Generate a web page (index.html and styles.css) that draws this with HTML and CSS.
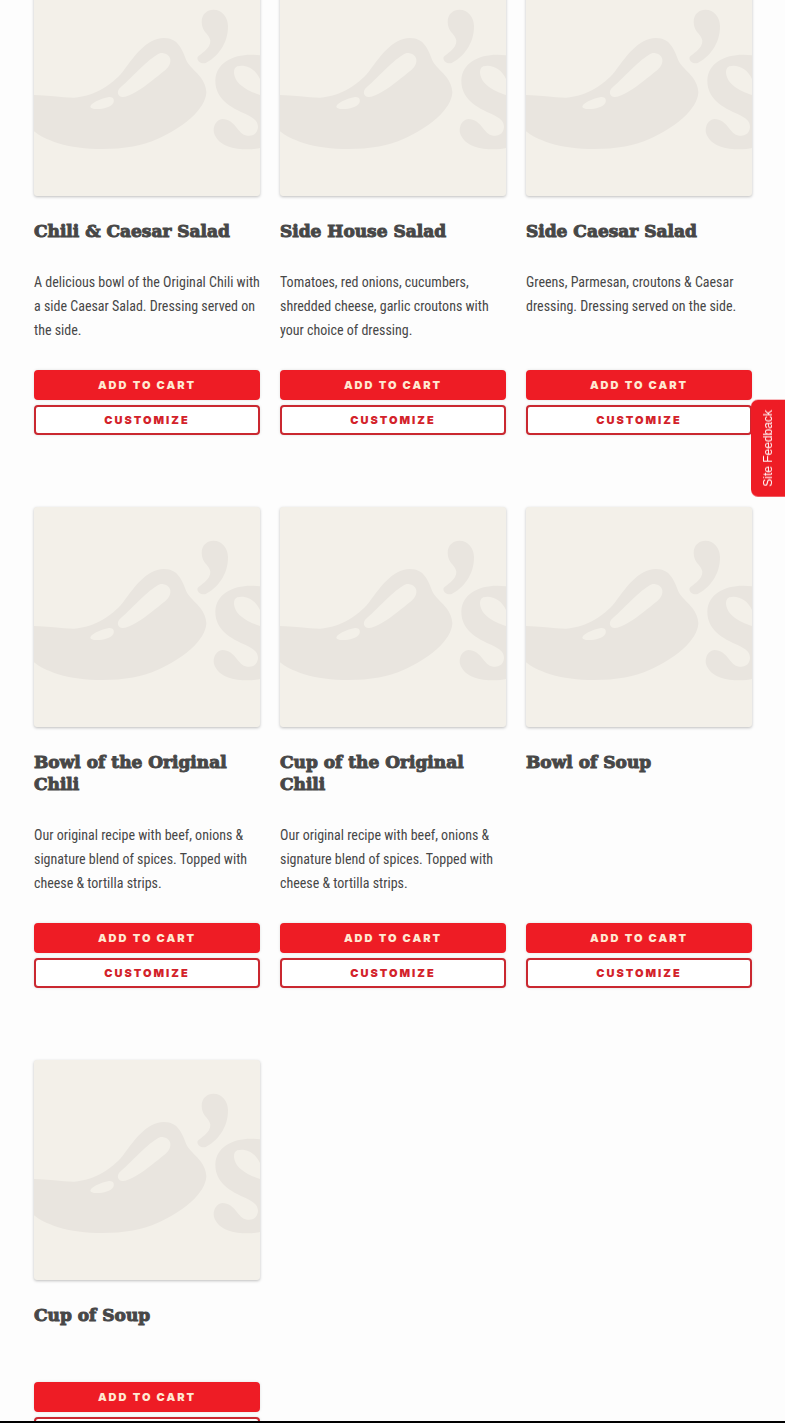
FILE: index.html
```html
<!DOCTYPE html>
<html lang="en">
<head>
  <meta charset="UTF-8">
  <meta name="viewport" content="width=device-width, initial-scale=1.0">
  <title>Soups, Chili &amp; Salads</title>
  <link rel="stylesheet" href="styles.css">
</head>
<body>

  <!-- Placeholder artwork shared by every menu item -->
  <svg class="sprite" aria-hidden="true">
    <symbol id="chili" viewBox="30 21 678 660" preserveAspectRatio="none">
      <path fill-rule="evenodd" d="M30 378 C70 378 110 386 150 386 C215 382 265 345 295 310 C325 270 365 207 420 207 C465 207 475 245 490 280 C505 305 545 325 547 370 C545 420 480 475 400 510 C330 545 190 550 100 522 C70 512 45 500 30 487 Z
        M410 252 C380 262 330 320 290 355 C275 368 282 385 297 384 C330 382 390 330 425 302 C447 284 445 252 410 252 Z
        M200 410 C205 402 225 390 255 384 C268 383 272 392 268 402 C260 415 235 421 215 420 C203 419 197 415 200 410 Z"/>
      <path d="M568 122 C595 122 612 145 612 172 C612 225 580 265 545 282 C530 286 517 275 521 264 C527 255 560 240 559 215 C557 195 533 190 533 158 C533 135 550 122 568 122 Z"/>
      <path d="M708 259 C640 250 576 275 574 335 C574 390 620 415 665 435 C690 448 702 455 702 475 C700 492 690 502 670 500 C640 497 635 450 595 450 C575 452 566 475 570 492 C580 525 620 541 665 541 C685 541 700 539 708 537 V378 C690 372 665 362 650 348 C630 332 622 300 640 292 C665 285 695 300 708 330 Z"/>
    </symbol>
  </svg>

  <main class="menu">
    <article class="item">
      <svg class="item-image" aria-hidden="true"><use href="#chili"/></svg>
      <h2>Chili &amp; Caesar Salad</h2>
      <p>A delicious bowl of the Original Chili with a side Caesar Salad. Dressing served on the side.</p>
      <div class="actions">
        <button class="btn add" type="button">Add to Cart</button>
        <button class="btn customize" type="button">Customize</button>
      </div>
    </article>

    <article class="item">
      <svg class="item-image" aria-hidden="true"><use href="#chili"/></svg>
      <h2>Side House Salad</h2>
      <p>Tomatoes, red onions, cucumbers, shredded cheese, garlic croutons with your choice of dressing.</p>
      <div class="actions">
        <button class="btn add" type="button">Add to Cart</button>
        <button class="btn customize" type="button">Customize</button>
      </div>
    </article>

    <article class="item">
      <svg class="item-image" aria-hidden="true"><use href="#chili"/></svg>
      <h2>Side Caesar Salad</h2>
      <p>Greens, Parmesan, croutons &amp; Caesar dressing. Dressing served on the side.</p>
      <div class="actions">
        <button class="btn add" type="button">Add to Cart</button>
        <button class="btn customize" type="button">Customize</button>
      </div>
    </article>

    <article class="item">
      <svg class="item-image" aria-hidden="true"><use href="#chili"/></svg>
      <h2>Bowl of the Original Chili</h2>
      <p>Our original recipe with beef, onions &amp; signature blend of spices. Topped with cheese &amp; tortilla strips.</p>
      <div class="actions">
        <button class="btn add" type="button">Add to Cart</button>
        <button class="btn customize" type="button">Customize</button>
      </div>
    </article>

    <article class="item">
      <svg class="item-image" aria-hidden="true"><use href="#chili"/></svg>
      <h2>Cup of the Original Chili</h2>
      <p>Our original recipe with beef, onions &amp; signature blend of spices. Topped with cheese &amp; tortilla strips.</p>
      <div class="actions">
        <button class="btn add" type="button">Add to Cart</button>
        <button class="btn customize" type="button">Customize</button>
      </div>
    </article>

    <article class="item">
      <svg class="item-image" aria-hidden="true"><use href="#chili"/></svg>
      <h2>Bowl of Soup</h2>
      <p></p>
      <div class="actions">
        <button class="btn add" type="button">Add to Cart</button>
        <button class="btn customize" type="button">Customize</button>
      </div>
    </article>

    <article class="item">
      <svg class="item-image" aria-hidden="true"><use href="#chili"/></svg>
      <h2>Cup of Soup</h2>
      <p></p>
      <div class="actions">
        <button class="btn add" type="button">Add to Cart</button>
        <button class="btn customize" type="button">Customize</button>
      </div>
    </article>
  </main>

  <button class="feedback" type="button">Site Feedback</button>
  <div class="bottom-bar"></div>

</body>
</html>
```
FILE: styles.css
```css
* {
  box-sizing: border-box;
}
body {
  margin: 0;
  height: 100vh;
  overflow: hidden;
  background-color: #fdfdfd;
  color: #474747;
  font-family: "Roboto Condensed", "Liberation Sans Narrow", "Liberation Sans", sans-serif;
}
.sprite {
  display: none;
}
.menu {
  display: grid;
  grid-template-columns: repeat(3, 1fr);
  gap: 72px 20px;
  margin-top: -24px;
  padding: 0 33px 0 34px;
}
.item {
  display: flex;
  flex-direction: column;
}
.item-image {
  display: block;
  width: 100%;
  height: 220px;
  border-radius: 3px;
  background-color: #f3f0e9;
  fill: #e9e5df;
  box-shadow: 0 1px 3px rgba(0, 0, 0, 0.25);
}
.item h2 {
  margin: 24px 0 28px;
  font-family: "DejaVu Serif", serif;
  font-size: 17px;
  font-weight: 900;
  line-height: 22px;
  -webkit-text-stroke: 1px #474747;
}
.item p {
  margin: 0 0 28px;
  font-size: 14px;
  line-height: 24px;
}
.actions {
  display: flex;
  flex-direction: column;
  gap: 5px;
  margin-top: auto;
}
.btn {
  height: 30px;
  padding: 0;
  border: 2px solid #ee1c25;
  border-radius: 4px;
  font-family: Inter, sans-serif;
  font-size: 11px;
  font-weight: 900;
  letter-spacing: 2px;
  text-transform: uppercase;
  cursor: pointer;
  box-shadow: 0 0 3px rgba(0, 0, 0, 0.12);
}
.add {
  background-color: #ee1c25;
  color: #ffe9d2;
}
.customize {
  border-color: #ca2830;
  background-color: #fff;
  color: #d3222a;
}
.feedback {
  position: fixed;
  top: 400px;
  right: 0;
  width: 34px;
  padding: 10px 0;
  border: 0;
  border-radius: 0 7px 7px 0;
  background-color: #ee1c25;
  color: #fff;
  font-family: "Liberation Sans", Arial, sans-serif;
  font-size: 12px;
  writing-mode: vertical-rl;
  transform: rotate(180deg);
  cursor: pointer;
}
.bottom-bar {
  position: fixed;
  right: 0;
  bottom: 0;
  left: 0;
  height: 2px;
  background-color: #000;
}

@media (max-width: 600px) {
  .menu {
    grid-template-columns: 1fr;
  }
}
```
